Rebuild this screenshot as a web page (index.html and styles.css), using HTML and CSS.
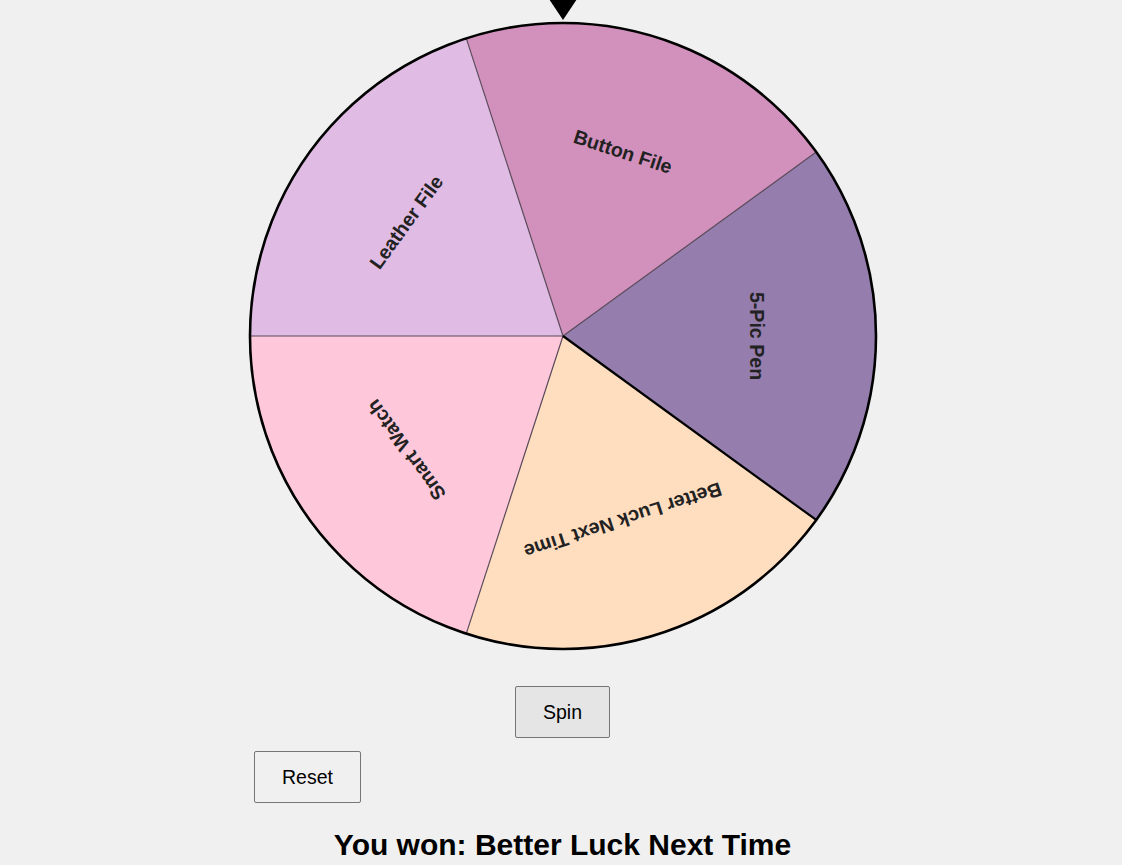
FILE: index.html
```html
<!DOCTYPE html>
<html lang="en">
<head>
<meta charset="utf-8">
<title>Spin the Wheel</title>
<link rel="stylesheet" href="styles.css">
</head>
<body>
<main class="app">
  <div class="wheel-wrap">
    <div class="pointer"></div>
    <svg class="wheel" width="640" height="640" viewBox="0 0 640 640">
      <g class="segments">
        <path d="M320 320 L223.28 22.32 A313 313 0 0 1 573.22 136.02 Z" fill="#d291bc"/>
        <path d="M320 320 L573.22 136.02 A313 313 0 0 1 573.22 503.98 Z" fill="#957dad"/>
        <path d="M320 320 L573.22 503.98 A313 313 0 0 1 223.28 617.68 Z" fill="#ffdec0"/>
        <path d="M320 320 L223.28 617.68 A313 313 0 0 1 7 320 Z" fill="#ffc8da"/>
        <path d="M320 320 L7 320 A313 313 0 0 1 223.28 22.32 Z" fill="#e0bbe3"/>
      </g>
      <g class="dividers">
        <line x1="320" y1="320" x2="223.28" y2="22.32"/>
        <line x1="320" y1="320" x2="573.22" y2="136.02"/>
        <line x1="320" y1="320" x2="223.28" y2="617.68"/>
        <line x1="320" y1="320" x2="7" y2="320"/>
      </g>
      <line class="divider-strong" x1="320" y1="320" x2="573.22" y2="503.98"/>
      <circle class="rim" cx="320" cy="320" r="313"/>
      <g class="labels">
        <text transform="translate(320 320) rotate(-72) translate(194 0) rotate(90)">Button File</text>
        <text transform="translate(320 320) rotate(0) translate(194 0) rotate(90)">5-Pic Pen</text>
        <text transform="translate(320 320) rotate(72) translate(194 0) rotate(90)">Better Luck Next Time</text>
        <text transform="translate(320 320) rotate(144) translate(194 0) rotate(90)">Smart Watch</text>
        <text transform="translate(320 320) rotate(216) translate(194 0) rotate(90)">Leather File</text>
      </g>
    </svg>
  </div>
  <button class="btn spin" type="button">Spin</button>
  <div class="controls">
    <button class="btn reset" type="button">Reset</button>
  </div>
  <h2 class="result">You won: Better Luck Next Time</h2>
</main>
</body>
</html>
```
FILE: styles.css
```css
html, body {
  margin: 0;
  padding: 0;
  background: #f0f0f0;
  font-family: "Liberation Sans", Arial, sans-serif;
  color: #000;
  overflow: hidden;
}

.app {
  display: flex;
  flex-direction: column;
  align-items: center;
  padding-left: 3px;
  width: 1122px;
  box-sizing: border-box;
}

.wheel-wrap {
  position: relative;
  width: 640px;
  height: 656px;
}

.wheel {
  display: block;
  margin-top: 16px;
}

.pointer {
  position: absolute;
  top: -10px;
  left: 300px;
  width: 0;
  height: 0;
  border-left: 20px solid transparent;
  border-right: 20px solid transparent;
  border-top: 30px solid #000;
  z-index: 2;
}

.dividers line {
  stroke: #5a4a5a;
  stroke-width: 1.2;
}

.divider-strong {
  stroke: #000;
  stroke-width: 2.2;
}

.rim {
  fill: none;
  stroke: #000;
  stroke-width: 2.6;
}

.labels text {
  font-family: "Liberation Sans", Arial, sans-serif;
  font-weight: bold;
  font-size: 19.6px;
  fill: #222;
  text-anchor: middle;
  dominant-baseline: central;
}

.btn {
  font-family: "Liberation Sans", Arial, sans-serif;
  font-size: 19.5px;
  line-height: 20px;
  padding: 15px 20px;
  border: 1px solid #767676;
  border-radius: 2px;
  color: #000;
  cursor: pointer;
}

.spin {
  margin-top: 30px;
  width: 95px;
  background: #e5e5e5;
}

.controls {
  width: 617px;
  display: flex;
  justify-content: flex-start;
  margin-top: 13px;
}

.reset {
  width: 107px;
  background: #f0f0f0;
}

.result {
  margin: 25px 0 0 0;
  font-size: 30px;
  line-height: 34px;
  font-weight: bold;
}
```
